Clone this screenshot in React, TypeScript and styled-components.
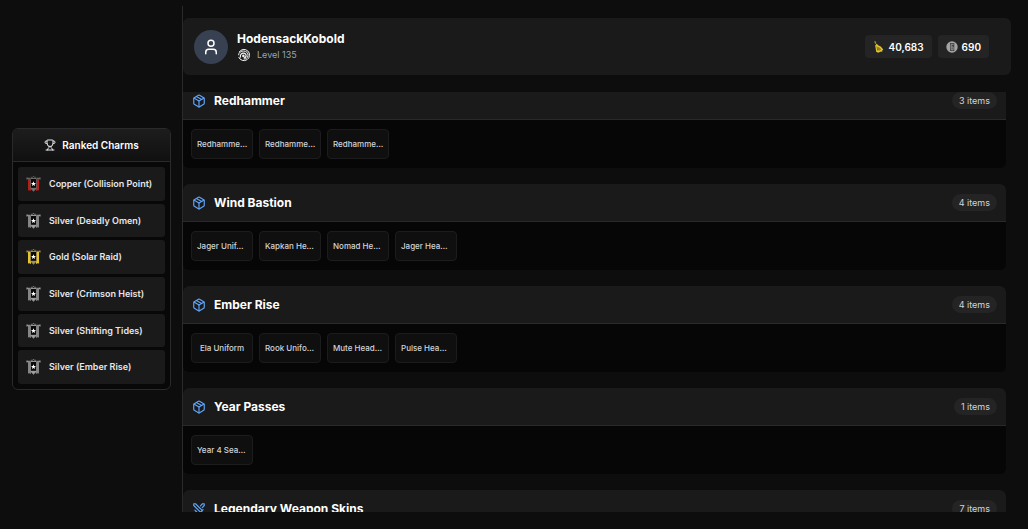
import React, { useLayoutEffect, useRef } from "react";
import styled, { createGlobalStyle } from "styled-components";
import { Package, Swords, Trophy, User } from "lucide-react";

const GlobalStyle = createGlobalStyle`
  * { box-sizing: border-box; }
  body {
    margin: 0;
    background: #0d0d0d;
    color: #ffffff;
    font-family: Inter, "Liberation Sans", sans-serif;
  }
  h1, h2, h3, p, ul { margin: 0; padding: 0; }
  ul { list-style: none; }
  svg { flex: none; }
`;

const Page = styled.div`
  display: flex;
  height: 100vh;
  padding: 6px 17px 17px 0;
`;

const Sidebar = styled.aside`
  flex: 0 0 183px;
  min-width: 0;
  display: flex;
  flex-direction: column;
  justify-content: center;
  padding: 0 11px 0 12px;
  border-right: 1px solid #2a2a2a;
`;

const CharmCard = styled.section`
  border: 1px solid #2a2a2a;
  border-radius: 6px;
  background: #080808;
  overflow: hidden;
`;

const CharmHeader = styled.header`
  display: flex;
  align-items: center;
  justify-content: center;
  gap: 6px;
  height: 33px;
  border-bottom: 1px solid #2a2a2a;
  background: linear-gradient(#1d1d1d, #101010);
`;

const CharmTitle = styled.h2`
  font-size: 10px;
  line-height: 16px;
  font-weight: 600;
`;

const CharmList = styled.ul`
  display: flex;
  flex-direction: column;
  gap: 3px;
  min-height: 227px;
  && { padding: 5px; }
`;

const CharmRow = styled.li`
  flex: 1;
  display: flex;
  align-items: center;
  gap: 8px;
  padding: 0 8px;
  border-radius: 3px;
  background: #1a1a1a;
  color: #e5e7eb;
  font-size: 9px;
  line-height: 14px;
  font-weight: 600;
  white-space: nowrap;
`;

const Main = styled.main`
  flex: 1;
  min-width: 0;
  display: flex;
  flex-direction: column;
  gap: 17px;
  padding-top: 12px;
`;

const ProfileBar = styled.header`
  flex: none;
  display: flex;
  align-items: center;
  gap: 9px;
  height: 57px;
  padding: 0 22px 0 11px;
  border-radius: 6px;
  background: #1a1a1a;
`;

const Avatar = styled.div`
  display: grid;
  place-items: center;
  width: 34px;
  height: 34px;
  border-radius: 50%;
  background: #374151;
`;

const Identity = styled.div`
  flex: 1;
  display: flex;
  flex-direction: column;
  padding-bottom: 2px;
`;

const PlayerName = styled.h1`
  font-size: 12px;
  line-height: 18px;
  font-weight: 700;
`;

const Level = styled.p`
  display: flex;
  align-items: center;
  gap: 6px;
  color: #9ca3af;
  font-size: 9px;
  line-height: 14px;
`;

const Balances = styled.div`
  display: flex;
  gap: 6px;
`;

const Balance = styled.div`
  display: flex;
  align-items: center;
  gap: 4px;
  height: 23px;
  padding: 0 8px;
  border-radius: 4px;
  background: #242424;
  font-size: 10px;
  line-height: 16px;
  font-weight: 600;
`;

const Scroller = styled.div`
  flex: 1;
  min-height: 0;
  display: flex;
  flex-direction: column;
  gap: 16px;
  padding-right: 5px;
  overflow-y: auto;
  scrollbar-width: none;
`;

const Group = styled.section`
  flex: none;
  border-radius: 6px;
  background: #060606;
  overflow: hidden;
`;

const GroupHeader = styled.header`
  display: flex;
  align-items: center;
  gap: 8px;
  height: 38px;
  padding: 0 9px;
  border-bottom: 1px solid #2a2a2a;
  background: #1a1a1a;
`;

const GroupTitle = styled.h2`
  flex: 1;
  font-size: 12px;
  line-height: 18px;
  font-weight: 700;
`;

const Count = styled.span`
  padding: 1px 7px;
  border-radius: 9px;
  background: #242424;
  color: #d1d5db;
  font-size: 9px;
  line-height: 15px;
`;

const Items = styled.ul`
  display: flex;
  flex-wrap: wrap;
  gap: 6px;
  && { padding: 9px 8px; }
`;

const Item = styled.li<{ $clipped: boolean }>`
  display: flex;
  align-items: center;
  justify-content: ${({ $clipped }) => ($clipped ? "flex-start" : "center")};
  width: 62px;
  height: 30px;
  padding: 0 5px;
  border: 1px solid #1c1c1c;
  border-radius: 4px;
  background: #0f0f0f;
  white-space: nowrap;
  color: #d1d5db;
  font-size: 8px;
  line-height: 12px;
  font-weight: 500;
`;

const CharmIcon = ({ banner, trim }: { banner: string; trim: string }) => (
  <svg width="15" height="18" viewBox="0 0 15 18" aria-hidden="true">
    <path d="M2 4h3v12l-1.500-.8L2 15.500zM10 4h3v11.500l-1.500-.3-1.500.8z" fill={banner} />
    <path d="M1 2.500v2M14 2.500v2M1 3.300h3.500M10.500 3.300H14" stroke={trim} strokeWidth="1" />
    <path d="M4.500 4.500 5.500 2l1 .8L7.500 1l1 1.800 1-.8 1 2.500v8.500l-3 3.500-3-3.500z" fill="#090909" stroke={trim} strokeWidth=".6" />
    <path d="M5 3.500h5M5 13.300h5L7.500 15.800z" fill={trim} stroke={trim} strokeWidth=".9" />
    <path d="m7.500 6.200.7 1.700 1.800.1-1.400 1.200.5 1.800-1.600-1-1.600 1 .5-1.800L5 8l1.800-.1z" fill="#fff" />
  </svg>
);

const LevelIcon = () => (
  <svg width="14" height="14" viewBox="0 0 14 14" fill="none" stroke="#f3f4f6" aria-hidden="true">
    <path d="M2.100 4.200A5.600 5.600 0 1 1 1.700 9" strokeWidth="1" />
    <path d="M1.500 7.200C1.800 4.500 4 2.900 6.700 3c2.900.1 4.700 2.200 4.300 4.800-.4 2.300-2.300 3.500-4.300 3.200" strokeWidth="1" />
    <path d="M3.500 9.600C2.700 6.800 4.400 5 6.600 5.100c1.800.1 2.800 1.400 2.500 2.900-.3 1.300-1.200 1.900-2.300 1.800" strokeWidth="1.200" />
    <circle cx="6.400" cy="7.900" r="1.300" fill="#f3f4f6" stroke="none" />
  </svg>
);

const RenownIcon = () => (
  <svg width="12" height="14" viewBox="0 0 12 14" aria-hidden="true">
    <path d="m1.800 1.200 1 2.600" stroke="#a98e24" strokeWidth="1.300" />
    <path d="m2.200 5.500 1.500-1.700 1.800 1.700 2.200.9 2.600 3-1 .9.100 1.300-2.200.2-2 1-2-1z" fill="#e3c632" />
    <path d="m3.900 6.400.8 4.100M5.700 7.400l2 2-2 .8z" stroke="#75621a" strokeWidth=".9" fill="none" />
  </svg>
);

const CreditsIcon = () => (
  <svg width="12" height="12" viewBox="0 0 12 12" fill="none" aria-hidden="true">
    <circle cx="6" cy="6" r="5.700" fill="#a3a3a3" />
    <path d="M4 2h4.300v8H4z" fill="#454545" />
    <path d="M7.500 3.300H5.200v5.400h1.900V6H5.400" stroke="#a3a3a3" strokeWidth=".8" />
  </svg>
);

const silver = { banner: "#858585", trim: "#a8a8a8" };
const copper = { banner: "#b3201b", trim: "#777777" };
const gold = { banner: "#e8c52b", trim: "#a99b63" };

const charms = [
  { name: "Copper (Collision Point)", metal: copper },
  { name: "Silver (Deadly Omen)", metal: silver },
  { name: "Gold (Solar Raid)", metal: gold },
  { name: "Silver (Crimson Heist)", metal: silver },
  { name: "Silver (Shifting Tides)", metal: silver },
  { name: "Silver (Ember Rise)", metal: silver },
];

const groups = [
  { title: "Redhammer", count: 3, icon: Package, items: ["Redhamme…", "Redhamme…", "Redhamme…"] },
  { title: "Wind Bastion", count: 4, icon: Package, items: ["Jager Unif…", "Kapkan He…", "Nomad He…", "Jager Hea…"] },
  { title: "Ember Rise", count: 4, icon: Package, items: ["Ela Uniform", "Rook Unifo…", "Mute Head…", "Pulse Hea…"] },
  { title: "Year Passes", count: 1, icon: Package, items: ["Year 4 Sea…"] },
  { title: "Legendary Weapon Skins", count: 7, icon: Swords, items: [] },
];

export default function App() {
  const scroller = useRef<HTMLDivElement>(null);

  useLayoutEffect(() => {
    if (scroller.current) scroller.current.scrollTop = 10;
  }, []);

  return (
    <>
      <GlobalStyle />
      <Page>
        <Sidebar>
          <CharmCard>
            <CharmHeader>
              <Trophy size={12} color="#e5e7eb" />
              <CharmTitle>Ranked Charms</CharmTitle>
            </CharmHeader>
            <CharmList>
              {charms.map(({ name, metal }) => (
                <CharmRow key={name}>
                  <CharmIcon {...metal} />
                  {name}
                </CharmRow>
              ))}
            </CharmList>
          </CharmCard>
        </Sidebar>
        <Main>
          <ProfileBar>
            <Avatar>
              <User size={18} />
            </Avatar>
            <Identity>
              <PlayerName>HodensackKobold</PlayerName>
              <Level>
                <LevelIcon />
                Level 135
              </Level>
            </Identity>
            <Balances>
              <Balance>
                <RenownIcon />
                40,683
              </Balance>
              <Balance>
                <CreditsIcon />
                690
              </Balance>
            </Balances>
          </ProfileBar>
          <Scroller ref={scroller}>
            {groups.map(({ title, count, icon: Icon, items }) => (
              <Group key={title}>
                <GroupHeader>
                  <Icon size={14} color="#60a5fa" />
                  <GroupTitle>{title}</GroupTitle>
                  <Count>{count} items</Count>
                </GroupHeader>
                <Items>
                  {items.map((name, index) => (
                    <Item key={index} $clipped={name.endsWith("…")}>
                      {name}
                    </Item>
                  ))}
                </Items>
              </Group>
            ))}
          </Scroller>
        </Main>
      </Page>
    </>
  );
}
